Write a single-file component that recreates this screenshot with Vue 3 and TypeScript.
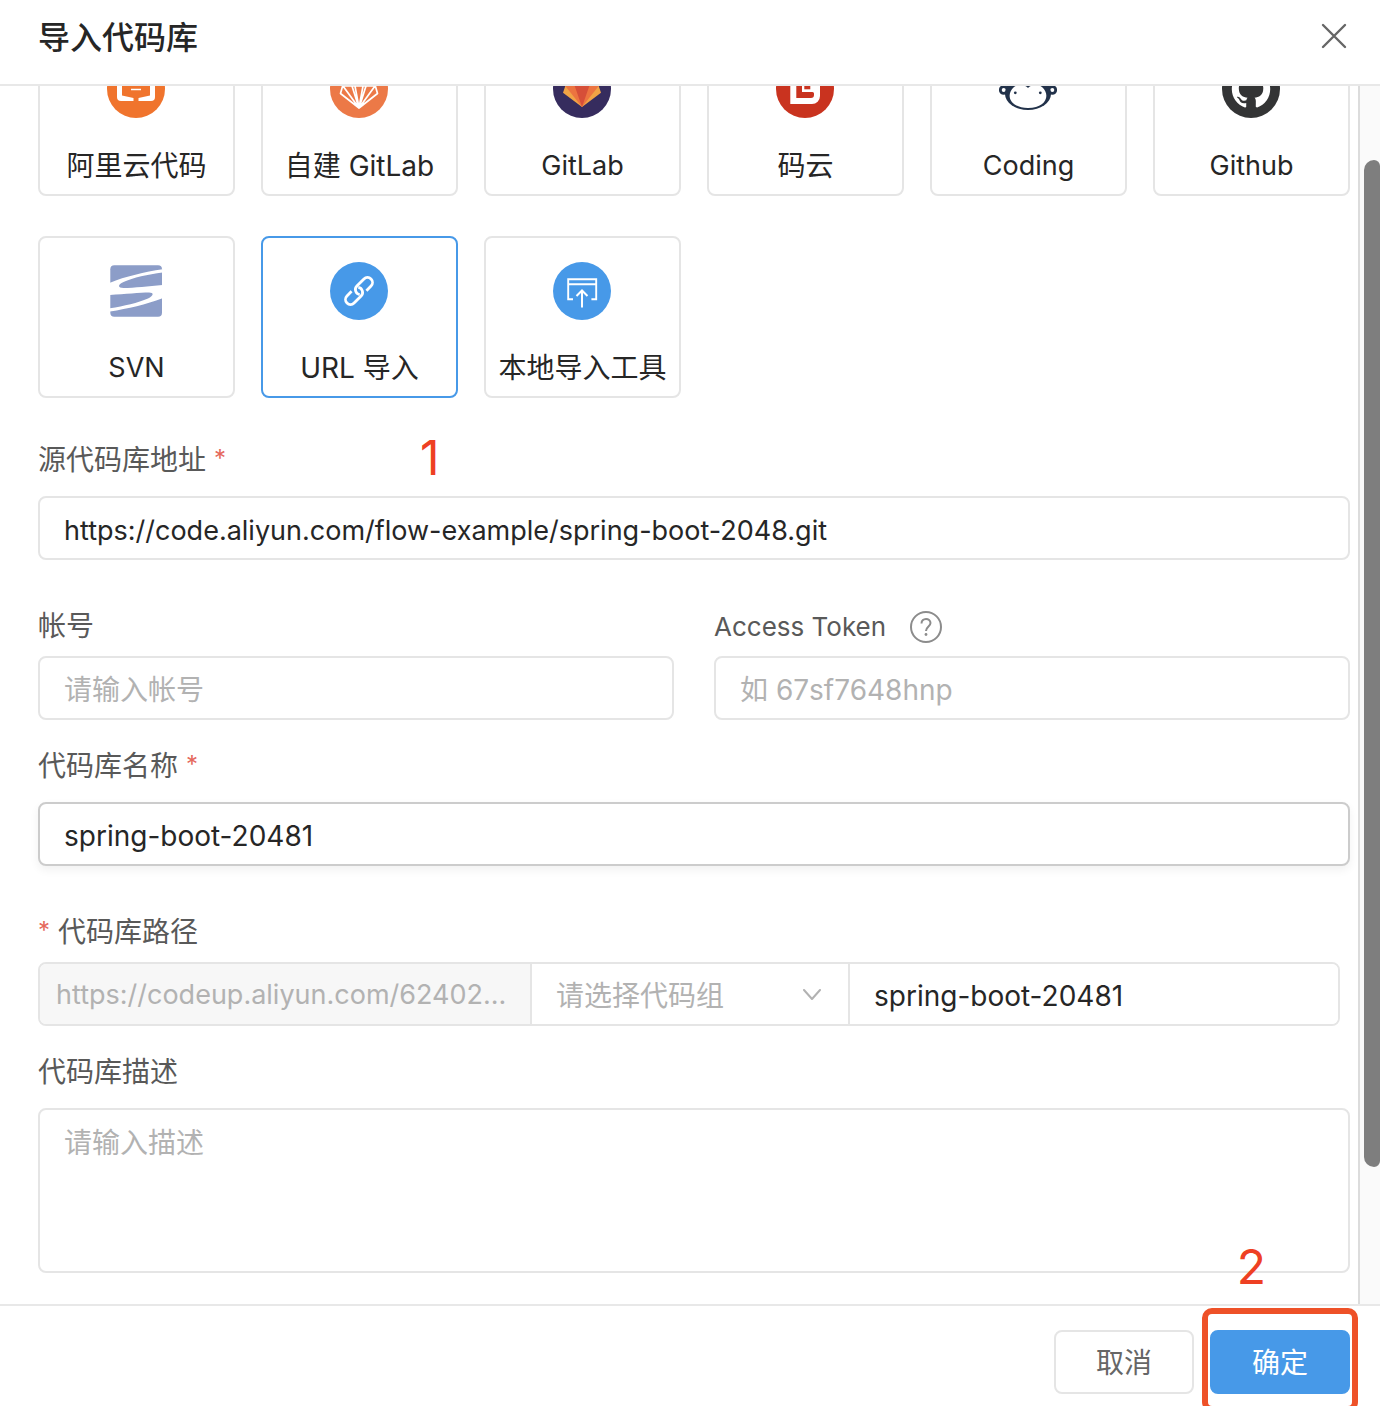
<script setup lang="ts">
import { nextTick, onMounted, ref } from 'vue'

interface Source {
  id: string
  label: string
  latin?: boolean
}

const sources: Source[] = [
  { id: 'aliyun', label: '阿里云代码' },
  { id: 'self-gitlab', label: '自建 GitLab' },
  { id: 'gitlab', label: 'GitLab', latin: true },
  { id: 'gitee', label: '码云' },
  { id: 'coding', label: 'Coding', latin: true },
  { id: 'github', label: 'Github', latin: true },
  { id: 'svn', label: 'SVN', latin: true },
  { id: 'url', label: 'URL 导入' },
  { id: 'local', label: '本地导入工具' },
]

const selected = ref('url')
const sourceUrl = ref('https://code.aliyun.com/flow-example/spring-boot-2048.git')
const account = ref('')
const token = ref('')
const repoName = ref('spring-boot-20481')
const pathPrefix = 'https://codeup.aliyun.com/62402...'
const group = ref('')
const repoPath = ref('spring-boot-20481')
const description = ref('')

const pane = ref<HTMLElement | null>(null)
const thumbTop = ref(0)
const thumbSize = ref(100)

function syncThumb() {
  const el = pane.value
  if (!el) return
  thumbTop.value = (el.scrollTop / el.scrollHeight) * 100
  thumbSize.value = (el.clientHeight / el.scrollHeight) * 100
}

onMounted(async () => {
  await nextTick()
  if (pane.value) pane.value.scrollTop = 89
  syncThumb()
})
</script>

<template>
  <main class="dialog" role="dialog" aria-labelledby="dialog-title">
    <header class="head">
      <h1 id="dialog-title" class="title">导入代码库</h1>
      <button class="close" type="button" aria-label="关闭">
        <svg width="28" height="28" viewBox="0 0 28 28" fill="none" stroke="#666" stroke-width="2.4" stroke-linecap="round">
          <path d="M3 3 25 25M25 3 3 25" />
        </svg>
      </button>
    </header>

    <div class="body">
      <div ref="pane" class="pane" @scroll="syncThumb">
        <div class="sources">
          <button
            v-for="s in sources"
            :key="s.id"
            type="button"
            class="source"
            :class="{ active: s.id === selected }"
            :aria-pressed="s.id === selected"
            @click="selected = s.id"
          >
            <svg class="icon" viewBox="0 0 58 58" fill="none" aria-hidden="true">
              <template v-if="s.id === 'aliyun'">
                <circle cx="29" cy="29" r="29" fill="#f0742d" />
                <path d="M14 17h30a4 4 0 0 1 4 4v16a4 4 0 0 1-4 4H14a4 4 0 0 1-4-4V21a4 4 0 0 1 4-4Z" fill="#fff" />
                <path d="M15 20h28v15.500l-11.500 2.500V41h-5v-3L15 35.500Z" fill="#f0742d" />
                <path d="M24 29.500h10" stroke="#fff" stroke-width="1.500" />
              </template>
              <template v-else-if="s.id === 'self-gitlab'">
                <circle cx="29" cy="29" r="29" fill="#ec7947" />
                <path d="M29 48 10.500 33.500 16 14l6 12h14l6-12 5.500 19.500ZM29 48 13 26h32ZM29 48l-7-22M29 48l7-22M29 48l-4-22M29 48l4-22" stroke="#fff" stroke-width="1.700" stroke-linejoin="round" />
              </template>
              <template v-else-if="s.id === 'gitlab'">
                <circle cx="29" cy="29" r="29" fill="#362c5e" />
                <path d="M29 47 10 32.700 12.300 26 17 12l5 14h14l5-14 4.700 14L48 32.700Z" fill="#f1a345" />
                <path d="M29 47 12.300 26h33.400Z" fill="#ec7440" />
                <path d="M29 47 21.700 26h14.600Z" fill="#d64f38" />
              </template>
              <template v-else-if="s.id === 'gitee'">
                <circle cx="29" cy="29" r="29" fill="#c9331f" />
                <path d="M22 14h22v6H24a3.700 3.700 0 0 0-3.700 3.700V38H35a3 3 0 0 0 3-3v-1.500a1.500 1.500 0 0 0-1.500-1.500H26v-6h18v10a8 8 0 0 1-8 8H14.300V22a8 8 0 0 1 7.700-8Z" fill="#fff" />
                <path d="M28.300 26h6v3.300h-6Z" fill="#c9331f" />
              </template>
              <template v-else-if="s.id === 'coding'">
                <circle cx="4.700" cy="30" r="3.400" stroke="#22324a" stroke-width="2.800" />
                <circle cx="53.300" cy="30" r="3.400" stroke="#22324a" stroke-width="2.800" />
                <path d="M29 10C17 10 8 17 7 28h44C50 17 41 10 29 10Z" fill="#22324a" />
                <ellipse cx="29" cy="34" rx="23" ry="16" fill="#22324a" />
                <path d="M29 28c4-4 10-4 14-1 9 8 4 21-14 21S6 35 15 27c4-3 10-3 14 1Z" fill="#fff" />
                <circle cx="16.300" cy="32.800" r="1.400" fill="#22324a" />
                <circle cx="41.300" cy="32.800" r="1.400" fill="#22324a" />
              </template>
              <template v-else-if="s.id === 'github'">
                <circle cx="29" cy="29" r="29" fill="#333435" />
                <path
                  transform="translate(9.800 10) scale(2.400)"
                  fill="#fff"
                  d="M8 0C3.580 0 0 3.580 0 8c0 3.540 2.290 6.530 5.470 7.590.4.070.55-.17.55-.38 0-.19-.01-.82-.01-1.490-2.010.37-2.530-.49-2.690-.94-.09-.23-.48-.94-.82-1.130-.28-.15-.68-.52-.01-.53.63-.01 1.080.58 1.230.82.72 1.210 1.870.87 2.330.66.07-.52.28-.87.51-1.070-1.780-.2-3.640-.89-3.640-3.950 0-.87.31-1.590.82-2.150-.08-.2-.36-1.020.08-2.120 0 0 .67-.21 2.200.82.64-.18 1.320-.27 2-.27s1.360.09 2 .27c1.530-1.040 2.200-.82 2.200-.82.44 1.100.16 1.920.08 2.120.51.56.82 1.270.82 2.150 0 3.070-1.870 3.750-3.650 3.950.29.25.54.73.54 1.480 0 1.070-.01 1.930-.01 2.200 0 .21.15.46.55.38A8.010 8.010 0 0 0 16 8c0-4.420-3.580-8-8-8Z"
                />
              </template>
              <template v-else-if="s.id === 'svn'">
                <rect x="3.300" y="3.300" width="51.700" height="51.500" rx="4" fill="#8c9dc8" />
                <path d="M55.500 7.300C38 10 18 14.500 3 20.700V33c15-1 30-2.500 39-2.500 5 0 5 3-1 6C31 41 17 44 3 46.300v3.200c18-3 36-7 52.500-13.300V23c-14 1-28 3-39 3-6 0-6-3.500 0-6C26 15.500 41 12.500 55.500 10.500Z" fill="#fff" />
              </template>
              <template v-else-if="s.id === 'url'">
                <circle cx="29" cy="29" r="29" fill="#4799e8" />
                <g transform="rotate(-45 29 29)" stroke="#fff" stroke-width="2.800">
                  <path d="M34.500 34H41a5 5 0 0 0 0-10H31a5 5 0 0 0-4 8" />
                  <path d="M23.500 24H17a5 5 0 0 0 0 10H27a5 5 0 0 0 4-8" />
                </g>
              </template>
              <template v-else>
                <circle cx="29" cy="29" r="29" fill="#4799e8" />
                <path d="M20 37.200h-4.800V17.300h28v19.900h-4.800M15.200 22.300h28" stroke="#fff" stroke-width="1.900" />
                <path d="M29 45.500V28.500M23.500 34l5.500-5.500 5.500 5.500" stroke="#fff" stroke-width="2" />
              </template>
            </svg>
            <span :class="{ latin: s.latin }">{{ s.label }}</span>
          </button>
        </div>

        <form @submit.prevent>
          <div class="field">
            <div class="label-row">
              <label for="source-url">源代码库地址 <span class="req">*</span></label>
            </div>
            <input id="source-url" v-model="sourceUrl" class="control latin" type="text" />
            <span class="mark step-one">1</span>
          </div>

          <div class="pair">
            <div class="field tight">
              <div class="label-row"><label for="account">帐号</label></div>
              <input id="account" v-model="account" class="control" type="text" placeholder="请输入帐号" />
            </div>
            <div class="field tight">
              <div class="label-row with-help">
                <label for="token">Access Token</label>
                <svg class="help" viewBox="0 0 32 32" fill="none" stroke="#8c8c8c" stroke-width="2" aria-hidden="true">
                  <circle cx="16" cy="16" r="15" />
                  <path d="M11.500 12.500c0-6 9-6 9-.5 0 3.500-4.500 3.500-4.500 8" />
                  <circle cx="16" cy="23.500" r="1.400" fill="#8c8c8c" stroke="none" />
                </svg>
              </div>
              <input id="token" v-model="token" class="control" type="text" placeholder="如 67sf7648hnp" />
            </div>
          </div>

          <div class="field near">
            <div class="label-row">
              <label for="repo-name">代码库名称 <span class="req">*</span></label>
            </div>
            <input id="repo-name" v-model="repoName" class="control hovered" type="text" />
          </div>

          <div class="field tight">
            <div class="label-row">
              <label for="repo-path"><span class="req">*</span> 代码库路径</label>
            </div>
            <div class="path">
              <input class="prefix latin" type="text" :value="pathPrefix" disabled aria-label="路径前缀" />
              <div class="group">
                <select v-model="group" aria-label="代码组">
                  <option value="" disabled>请选择代码组</option>
                </select>
                <svg class="chevron" viewBox="0 0 20 12" fill="none" stroke="#b2b2b2" stroke-width="2" stroke-linecap="round" stroke-linejoin="round" aria-hidden="true">
                  <path d="m2 1 8 9 8-9" />
                </svg>
              </div>
              <input id="repo-path" v-model="repoPath" class="slug" type="text" />
            </div>
          </div>

          <div class="field near">
            <div class="label-row"><label for="description">代码库描述</label></div>
            <textarea id="description" v-model="description" class="control area" placeholder="请输入描述"></textarea>
          </div>
        </form>
      </div>
      <div class="rail">
        <div class="thumb" :style="{ top: thumbTop + '%', height: thumbSize + '%' }"></div>
      </div>
    </div>

    <footer class="foot">
      <span class="mark step-two">2</span>
      <button class="btn" type="button">取消</button>
      <div class="spot">
        <button class="btn primary" type="button">确定</button>
      </div>
    </footer>
  </main>
</template>

<style>
body {
  margin: 0;
}
</style>

<style scoped>
.dialog {
  display: flex;
  flex-direction: column;
  height: 100vh;
  overflow: hidden;
  background: #fff;
  color: #262626;
  font-family: Inter, "Noto Sans CJK SC", sans-serif;
  font-size: 28px;
  line-height: 42px;
}

.dialog * {
  box-sizing: border-box;
}

.dialog button,
.dialog input,
.dialog select,
.dialog textarea {
  margin: 0;
  font: inherit;
  color: inherit;
  outline: none;
}

.dialog .latin {
  font-size: 27px;
}

.head {
  display: flex;
  align-items: center;
  justify-content: space-between;
  padding: 12px 32px 24px 38px;
  border-bottom: 2px solid #e8e8e8;
}

.title {
  margin: 0;
  padding-top: 4px;
  font-size: 32px;
  line-height: 44px;
  font-weight: 500;
}

.close {
  display: flex;
  padding: 0;
  border: 0;
  background: none;
}

.body {
  display: flex;
  flex: 1;
  min-height: 0;
}

.pane {
  flex: 1;
  min-width: 0;
  padding: 37px 8px 0 38px;
  overflow-y: scroll;
  scrollbar-width: none;
}

.rail {
  position: relative;
  width: 22px;
  border-left: 2px solid #dcdcdc;
  background: #fafafa;
}

.thumb {
  position: absolute;
  left: 4px;
  right: 0;
  border-radius: 10px 6px 6px 10px;
  background: #7e7e7e;
}

.sources {
  display: grid;
  grid-template-columns: repeat(6, minmax(0, 1fr));
  gap: 40px 26px;
}

.source {
  display: flex;
  flex-direction: column;
  align-items: center;
  gap: 27px;
  padding: 24px 0 7px;
  border: 2px solid #e5e5e5;
  border-radius: 8px;
  background: #fff;
  white-space: nowrap;
}

.source.active {
  border-color: #4799e8;
}

.icon {
  width: 58px;
  height: 58px;
  margin-right: 1px;
}

form {
  padding-bottom: 196px;
}

.field {
  position: relative;
  display: flex;
  flex-direction: column;
  gap: 16px;
  margin-top: 40px;
}

.field.tight {
  gap: 10px;
  margin-top: 44px;
}

.field.near {
  margin-top: 24px;
}

.pair {
  display: grid;
  grid-template-columns: 1fr 1fr;
  gap: 40px;
}

.label-row {
  display: flex;
  align-items: center;
  gap: 24px;
  height: 42px;
  padding-top: 2px;
  color: #595959;
}

.label-row.with-help {
  padding-top: 4px;
  font-size: 26px;
}

.req {
  font-size: 24px;
  line-height: 24px;
  vertical-align: 3px;
  color: #e5685c;
}

.help {
  width: 32px;
  height: 32px;
}

.control {
  width: 100%;
  height: 64px;
  padding: 4px 24px 0;
  border: 2px solid #e5e5e5;
  border-radius: 8px;
  background: #fff;
}

.control.hovered {
  border-color: #ccc;
  box-shadow: 0 4px 10px rgba(0, 0, 0, 0.06);
}

.control::placeholder {
  color: #b2b2b2;
  opacity: 1;
}

.control.area {
  display: block;
  height: 165px;
  padding: 12px 24px;
  resize: none;
}

.path {
  display: grid;
  grid-template-columns: minmax(0, 490fr) minmax(0, 320fr) minmax(0, 488fr);
  height: 64px;
  margin-right: 10px;
  border: 2px solid #e5e5e5;
  border-radius: 8px;
  overflow: hidden;
}

.path input,
.path select {
  width: 100%;
  min-width: 0;
  border: 0;
  border-radius: 0;
  background: #fff;
}

.path .prefix {
  padding: 2px 16px 0;
  background: #f7f7f7;
  color: #b2b2b2;
}

.group {
  position: relative;
  display: flex;
  border: 0 solid #e5e5e5;
  border-width: 0 2px;
}

.path .group select {
  padding: 4px 48px 0 24px;
  appearance: none;
  color: #b2b2b2;
  opacity: 1;
}

.chevron {
  position: absolute;
  top: 25px;
  right: 26px;
  width: 20px;
  height: 12px;
  pointer-events: none;
}

.path .slug {
  padding: 4px 24px 0;
}

.foot {
  position: relative;
  display: flex;
  justify-content: flex-end;
  gap: 16px;
  padding: 24px 30px 12px;
  border-top: 2px solid #e8e8e8;
}

.btn {
  width: 140px;
  height: 64px;
  padding: 2px 0 0;
  border: 2px solid #e5e5e5;
  border-radius: 8px;
  background: #fff;
}

.dialog .btn {
  color: #666;
}

.dialog .btn.primary {
  border-color: #4799e8;
  background: #4799e8;
  color: #fff;
}

.spot {
  position: relative;
}

.spot::after {
  content: "";
  position: absolute;
  inset: -22px -8px -18px;
  border: 6px solid #ee5128;
  border-radius: 10px;
  pointer-events: none;
}

.mark {
  position: absolute;
  font-size: 48px;
  line-height: 48px;
  color: #ee4023;
}

.step-one {
  top: -4px;
  left: 382px;
}

.step-two {
  top: -63px;
  right: 114px;
}
</style>
